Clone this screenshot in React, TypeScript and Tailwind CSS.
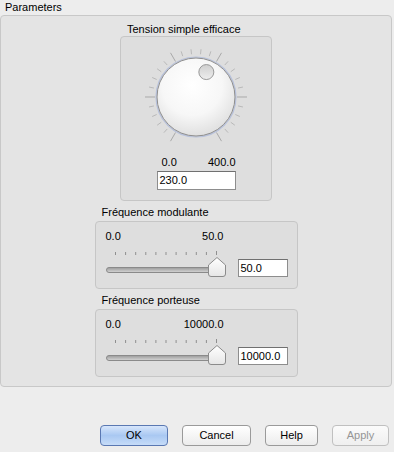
import React from 'react'

const font = { fontFamily: '"Liberation Sans", Arial, sans-serif' }

function Dial() {
  const cx = 55
  const cy = 55
  const ticks = Array.from({ length: 26 }, (_, k) => {
    const theta = ((30 + k * 12) * Math.PI) / 180
    const dx = -Math.sin(theta)
    const dy = Math.cos(theta)
    const major = k % 5 === 0
    const r1 = major ? 41 : 43
    const r2 = major ? 51 : 48
    return (
      <line
        key={k}
        x1={cx + dx * r1}
        y1={cy + dy * r1}
        x2={cx + dx * r2}
        y2={cy + dy * r2}
        stroke={major ? '#a9a9a9' : '#b9b9b9'}
        strokeWidth="1"
      />
    )
  })
  const a = (22.5 * Math.PI) / 180
  const ix = cx + Math.sin(a) * 27
  const iy = cy - Math.cos(a) * 27

  return (
    <svg width="110" height="110" viewBox="0 0 110 110">
      <defs>
        <radialGradient id="knob" cx="0.45" cy="0.35" r="0.7">
          <stop offset="0" stopColor="#ffffff" />
          <stop offset="0.55" stopColor="#f7f7f7" />
          <stop offset="1" stopColor="#dcdcdc" />
        </radialGradient>
        <linearGradient id="pip" x1="0" y1="0" x2="0" y2="1">
          <stop offset="0" stopColor="#cfcfcf" />
          <stop offset="1" stopColor="#eeeeee" />
        </linearGradient>
      </defs>
      {ticks}
      <circle cx={cx} cy={cy} r="40" fill="none" stroke="#b8c2dc" strokeWidth="1.2" />
      <circle cx={cx} cy={cy} r="39" fill="url(#knob)" stroke="#8e8e8e" strokeWidth="1" />
      <circle cx={ix} cy={iy} r="7.5" fill="url(#pip)" stroke="#999999" strokeWidth="1" />
    </svg>
  )
}

function SliderTrack() {
  const ticks = Array.from({ length: 11 }, (_, k) => {
    const x = 9.5 + k * 10.1
    const last = k === 10
    return <line key={k} x1={x} y1={last ? 8 : 9} x2={x} y2={12} stroke="#8f8f8f" strokeWidth="1" />
  })
  return (
    <svg width="120" height="36" viewBox="0 0 120 36">
      <defs>
        <linearGradient id="track" x1="0" y1="0" x2="0" y2="1">
          <stop offset="0" stopColor="#9a9a9a" />
          <stop offset="1" stopColor="#d6d6d6" />
        </linearGradient>
        <linearGradient id="handle" x1="0" y1="0" x2="0" y2="1">
          <stop offset="0" stopColor="#ffffff" />
          <stop offset="1" stopColor="#e6e6e6" />
        </linearGradient>
      </defs>
      {ticks}
      <rect x="0.5" y="24.5" width="110" height="5" rx="2.5" fill="url(#track)" stroke="#8a8a8a" strokeWidth="1" />
      <path
        d="M111 14.5 L119.5 22 L119.5 31 Q119.5 33.5 117 33.5 L105 33.5 Q102.5 33.5 102.5 31 L102.5 22 Z"
        fill="url(#handle)"
        stroke="#8b8b8b"
        strokeWidth="1"
      />
    </svg>
  )
}

function SliderGroup({ title, max, value }: { title: string; max: string; value: string }) {
  return (
    <div className="flex flex-col">
      <div className="h-[13px] pl-[7px] text-[11px] leading-[13px] text-black">{title}</div>
      <div className="mt-[2px] flex h-[68px] w-[203px] rounded-[4px] border border-[#c6c6c6] bg-[#dedede]">
        <div className="ml-[10px] flex w-[120px] flex-col">
          <div className="mt-[8px] flex h-[13px] justify-between pr-[2px] text-[11px] leading-[13px] text-black">
            <span>0.0</span>
            <span>{max}</span>
          </div>
          <SliderTrack />
        </div>
        <div className="ml-[12px] mt-[37px] h-[18px] w-[50px] border border-[#8d8d8d] border-t-[#707070] bg-white pl-[2px] text-[11px] leading-[16px] text-black">
          {value}
        </div>
      </div>
    </div>
  )
}

function Button({ label, w, primary, disabled }: { label: string; w: string; primary?: boolean; disabled?: boolean }) {
  const base = 'flex h-[21px] items-center justify-center rounded-[4px] border text-[11px] '
  const look = primary
    ? 'border-[#5a78b2] bg-gradient-to-b from-[#d7e6fb] via-[#a9c8f2] to-[#c6dcf8] text-black'
    : disabled
      ? 'border-[#c0c0c0] bg-gradient-to-b from-[#fbfbfb] to-[#efefef] text-[#959595]'
      : 'border-[#9a9a9a] bg-gradient-to-b from-[#ffffff] to-[#ececec] text-black'
  return <div className={base + look + ' ' + w}>{label}</div>
}

export default function App() {
  return (
    <div className="flex h-[452px] w-[394px] flex-col bg-[#ededed]" style={font}>
      <div className="h-[15px] pl-[5px] pt-[1px] text-[11px] leading-[13px] text-black">Parameters</div>
      <div className="flex h-[372px] w-[392px] flex-col items-center rounded-[4px] border border-[#c8c8c8] bg-[#e4e4e4]">
        <div className="mt-[7px] flex flex-col">
          <div className="h-[13px] pl-[7px] text-[11px] leading-[13px] text-black">Tension simple efficace</div>
          <div className="flex h-[165px] w-[152px] flex-col items-center rounded-[4px] border border-[#c6c6c6] bg-[#dedede]">
            <div className="mt-[5px]">
              <Dial />
            </div>
            <div className="mt-[4px] flex h-[13px] w-[79px] justify-between pl-[5px] text-[11px] leading-[13px] text-black">
              <span>0.0</span>
              <span>400.0</span>
            </div>
            <div className="mt-[2px] h-[19px] w-[79px] border border-[#8d8d8d] border-t-[#707070] bg-white pl-[2px] text-[11px] leading-[17px] text-black">
              230.0
            </div>
          </div>
        </div>
        <div className="mt-[5px]">
          <SliderGroup title="Fréquence modulante" max="50.0" value="50.0" />
        </div>
        <div className="mt-[5px]">
          <SliderGroup title="Fréquence porteuse" max="10000.0" value="10000.0" />
        </div>
      </div>
      <div className="mt-[38px] flex justify-end gap-[14px] pr-[5px]">
        <Button label="OK" w="w-[68px]" primary />
        <Button label="Cancel" w="w-[69px]" />
        <Button label="Help" w="w-[53px]" />
        <Button label="Apply" w="w-[57px]" disabled />
      </div>
    </div>
  )
}
